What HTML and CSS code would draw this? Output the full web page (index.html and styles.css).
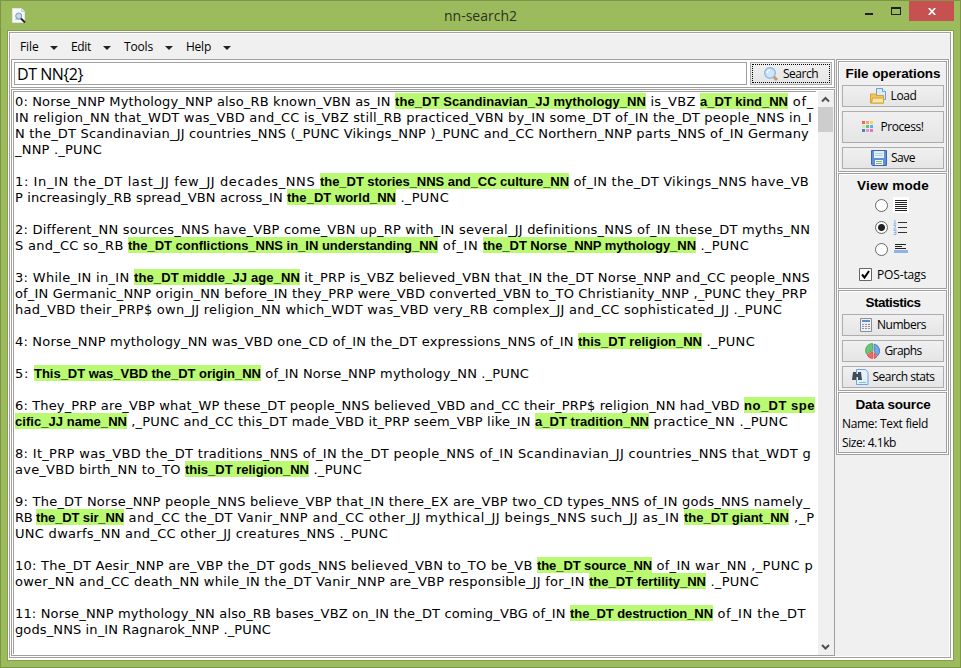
FILE: index.html
```
<!DOCTYPE html>
<html lang="en">
<head>
<meta charset="utf-8">
<title>nn-search2</title>
<link rel="stylesheet" href="styles.css">
</head>
<body>
<div class="window">
  <header class="titlebar">
    <svg class="app-icon" width="15" height="16" viewBox="0 0 15 16"><path d="M.5.5h9l3 3v11H.5z" fill="#f7f9fb" stroke="#dfe5ea"/><path d="M9.5.5v3h3" fill="#dfe6ec" stroke="#c3cbd2"/><path d="M3 12l3-8 3 8z" fill="#b9cde4"/><circle cx="6.7" cy="8" r="3" fill="#c6d9ee" stroke="#8198b4"/><path d="M9 10.5l4 4" stroke="#222" stroke-width="1.8"/></svg>
    <h1 class="title"><span data-w="73">nn-search2</span></h1>
    <div class="controls">
      <svg width="62" height="20" viewBox="0 0 62 20"><path d="M18 12h8v2h-8z" fill="#1e1e1e"/><path d="M44 6h10v8H44zM45 8v5h8V8z" fill="#1e1e1e" fill-rule="evenodd"/></svg>
      <div class="close"><svg width="8" height="7" viewBox="0 0 8 7"><path d="M.8 0l6.4 7M7.2 0L.8 7" stroke="#fff" stroke-width="1.7"/></svg></div>
    </div>
  </header>
  <div class="client">
    <nav class="menu">
      <span class="item m1"><span data-w="18.5">File</span><i></i></span>
      <span class="item m2"><span data-w="20">Edit</span><i></i></span>
      <span class="item m3"><span data-w="29">Tools</span><i></i></span>
      <span class="item m4"><span data-w="25">Help</span><i></i></span>
    </nav>
    <div class="body">
      <main class="main">
        <div class="search-row">
          <div class="query"><span data-w="66">DT NN{2}</span></div>
          <button class="btn search"><span class="focus"><svg width="16" height="16" viewBox="0 0 16 16"><path d="M10 10l4 4" stroke="#c99a5b" stroke-width="3"/><circle cx="7" cy="7" r="5.300" fill="#cfe6f8" stroke="#8fb9e0" stroke-width="1.4"/><path d="M4 7a3 3 0 0 1 3-3" fill="none" stroke="#fff"/></svg><span data-w="35">Search</span></span></button>
        </div>
        <div class="results">
          <div class="text">
<p><span data-w="380">0: Norse_NNP Mythology_NNP also_RB known_VBN as_IN </span><b data-w="251">the_DT Scandinavian_JJ mythology_NN</b><span data-w="54"> is_VBZ </span><b data-w="88">a_DT kind_NN</b><span data-w="26"> of_</span></p>
<p><span data-w="797">IN religion_NN that_WDT was_VBD and_CC is_VBZ still_RB practiced_VBN by_IN some_DT of_IN the_DT people_NNS in_I</span></p>
<p><span data-w="794">N the_DT Scandinavian_JJ countries_NNS (_PUNC Vikings_NNP )_PUNC and_CC Northern_NNP parts_NNS of_IN Germany</span></p>
<p><span data-w="87">_NNP ._PUNC</span></p>
<p></p>
<p><span data-w="305">1: In_IN the_DT last_JJ few_JJ decades_NNS </span><b data-w="249">the_DT stories_NNS and_CC culture_NN</b><span data-w="240"> of_IN the_DT Vikings_NNS have_VB</span></p>
<p><span data-w="272">P increasingly_RB spread_VBN across_IN </span><b data-w="109">the_DT world_NN</b><span data-w="53"> ._PUNC</span></p>
<p></p>
<p><span data-w="795">2: Different_NN sources_NNS have_VBP come_VBN up_RP with_IN several_JJ definitions_NNS of_IN these_DT myths_NN</span></p>
<p><span data-w="113">S and_CC so_RB </span><b data-w="310">the_DT conflictions_NNS in_IN understanding_NN</b><span data-w="45"> of_IN </span><b data-w="213">the_DT Norse_NNP mythology_NN</b><span data-w="53"> ._PUNC</span></p>
<p></p>
<p><span data-w="119">3: While_IN in_IN </span><b data-w="166">the_DT middle_JJ age_NN</b><span data-w="510"> it_PRP is_VBZ believed_VBN that_IN the_DT Norse_NNP and_CC people_NNS</span></p>
<p><span data-w="792">of_IN Germanic_NNP origin_NN before_IN they_PRP were_VBD converted_VBN to_TO Christianity_NNP ,_PUNC they_PRP</span></p>
<p><span data-w="767">had_VBD their_PRP$ own_JJ religion_NN which_WDT was_VBD very_RB complex_JJ and_CC sophisticated_JJ ._PUNC</span></p>
<p></p>
<p><span data-w="563">4: Norse_NNP mythology_NN was_VBD one_CD of_IN the_DT expressions_NNS of_IN </span><b data-w="124">this_DT religion_NN</b><span data-w="53"> ._PUNC</span></p>
<p></p>
<p><span data-w="19">5: </span><b data-w="227">This_DT was_VBD the_DT origin_NN</b><span data-w="268"> of_IN Norse_NNP mythology_NN ._PUNC</span></p>
<p></p>
<p><span data-w="729">6: They_PRP are_VBP what_WP these_DT people_NNS believed_VBD and_CC their_PRP$ religion_NN had_VBD </span><b data-w="71">no_DT spe</b></p>
<p><b data-w="112">cific_JJ name_NN</b><span data-w="408"> ,_PUNC and_CC this_DT made_VBD it_PRP seem_VBP like_IN </span><b data-w="114">a_DT tradition_NN</b><span data-w="139"> practice_NN ._PUNC</span></p>
<p></p>
<p><span data-w="796">8: It_PRP was_VBD the_DT traditions_NNS of_IN the_DT people_NNS of_IN Scandinavian_JJ countries_NNS that_WDT g</span></p>
<p><span data-w="170">ave_VBD birth_NN to_TO </span><b data-w="124">this_DT religion_NN</b><span data-w="53"> ._PUNC</span></p>
<p></p>
<p><span data-w="795">9: The_DT Norse_NNP people_NNS believe_VBP that_IN there_EX are_VBP two_CD types_NNS of_IN gods_NNS namely_</span></p>
<p><span data-w="21">RB </span><b data-w="88">the_DT sir_NN</b><span data-w="560"> and_CC the_DT Vanir_NNP and_CC other_JJ mythical_JJ beings_NNS such_JJ as_IN </span><b data-w="105">the_DT giant_NN</b><span data-w="26"> ,_P</span></p>
<p><span data-w="373">UNC dwarfs_NN and_CC other_JJ creatures_NNS ._PUNC</span></p>
<p></p>
<p><span data-w="522">10: The_DT Aesir_NNP are_VBP the_DT gods_NNS believed_VBN to_TO be_VB </span><b data-w="115">the_DT source_NN</b><span data-w="161"> of_IN war_NN ,_PUNC p</span></p>
<p><span data-w="574">ower_NN and_CC death_NN while_IN the_DT Vanir_NNP are_VBP responsible_JJ for_IN </span><b data-w="117">the_DT fertility_NN</b><span data-w="53"> ._PUNC</span></p>
<p></p>
<p><span data-w="555">11: Norse_NNP mythology_NN also_RB bases_VBZ on_IN the_DT coming_VBG of_IN </span><b data-w="143">the_DT destruction_NN</b><span data-w="93"> of_IN the_DT</span></p>
<p><span data-w="256">gods_NNS in_IN Ragnarok_NNP ._PUNC</span></p>
          </div>
          <div class="scrollbar">
            <svg width="15" height="16" viewBox="0 0 15 16"><path d="M4 10.500L7.500 7l3.500 3.500" fill="none" stroke="#505050" stroke-width="2"/></svg>
            <div class="thumb"></div>
            <svg class="down" width="15" height="16" viewBox="0 0 15 16"><path d="M4 6L7.500 9.500 11 6" fill="none" stroke="#505050" stroke-width="2"/></svg>
          </div>
        </div>
      </main>
      <aside class="side">
        <section class="panel files">
          <h2><span data-w="95">File operations</span></h2>
          <button class="btn"><svg width="17" height="16" viewBox="0 0 17 16"><path d="M6.500.5h6l3 3v8h-9z" fill="#d9eafb" stroke="#6f9fd6"/><path d="M12.500.5v3h3" fill="#fff" stroke="#6f9fd6"/><path d="M.5 15V6h5l1 1.500h7V15z" fill="#f3c65c" stroke="#d9a033"/><path d="M1.500 15l1-5h11v5z" fill="#fbe7a6" stroke="#d9a033"/></svg><span data-w="26">Load</span></button>
          <button class="btn tall"><svg class="grid" width="12" height="12" viewBox="0 0 12 12"><path d="M0 0h3v3H0z" fill="#ee6868"/><path d="M4 0h3v3H4z" fill="#fba36c"/><path d="M8 0h3v3H8z" fill="#f0d563"/><path d="M0 4h3v3H0z" fill="#cfe8b0"/><path d="M4 4h3v3H4z" fill="#5bc86b"/><path d="M8 4h3v3H8z" fill="#5cace8"/><path d="M0 8h3v3H0z" fill="#5d7cb4"/><path d="M4 8h3v3H4z" fill="#d99ae0"/><path d="M8 8h3v3H8z" fill="#f06fb0"/></svg><span data-w="43">Process!</span></button>
          <button class="btn"><svg width="16" height="16" viewBox="0 0 16 16"><path d="M.5.5h15v15h-14l-1-1z" fill="#5f8fdc" stroke="#3a68b8"/><path d="M3 1h10v7H3z" fill="#e9f1fb"/><path d="M4 3.500h8M4 5.500h8" stroke="#b6cbe8"/><path d="M4 10h8v5H4z" fill="#f4f8f0"/><path d="M5 11.500h6M5 13.500h6" stroke="#85b765"/></svg><span data-w="24">Save</span></button>
        </section>
        <section class="panel view">
          <h2><span data-w="72">View mode</span></h2>
          <div class="modes">
          <div class="mode"><i class="radio"></i><svg width="16" height="16" viewBox="0 0 16 16"><path d="M0 0h16v16H0z" fill="#fff"/><path d="M2 3.500h12M2 5.500h12M2 7.500h12M2 9.500h12M2 11.500h12M2 13.500h12" stroke="#222"/></svg></div>
          <div class="mode"><i class="radio on"></i><svg width="16" height="16" viewBox="0 0 16 16"><path d="M5 3.500h9M5 8.500h9M5 13.500h9" stroke="#333"/><path d="M1 1.500h1v3.500M.5 5h3M.5 6.500h2v1.500l-2 2h3M.5 11.500h2.500v4H.5M1 13.500h2" fill="none" stroke="#8fb2e6"/></svg></div>
          <div class="mode"><i class="radio"></i><svg width="16" height="16" viewBox="0 0 16 16"><path d="M2 3.500h11M2 5.500h7M2 7.500h11" stroke="#222"/><path d="M1 9h14v3H1z" fill="#8fb2e6"/></svg></div>
          </div>
          <div class="check"><svg width="13" height="13" viewBox="0 0 13 13"><path d="M.5.5h12v12H.5z" fill="#fff" stroke="#666"/><path d="M3 6.500l2.500 3L10 3" fill="none" stroke="#000" stroke-width="2"/></svg><span data-w="49">POS-tags</span></div>
        </section>
        <section class="panel stats">
          <h2><span data-w="55">Statistics</span></h2>
          <button class="btn"><svg width="12" height="14" viewBox="0 0 12 14"><path d="M.5.5h11v13H.5z" fill="#eef1f4" stroke="#8d8d95"/><path d="M2 2h8v2H2z" fill="#5f8bd0"/><path d="M2 6.500h8M2 8.500h8M2 10.500h8" stroke="#8792a5" stroke-dasharray="2 1"/><path d="M8 6h2v1H8z" fill="#e06040"/></svg><span class="gap" data-w="49">Numbers</span></button>
          <button class="btn"><svg width="16" height="16" viewBox="0 0 16 16"><path d="M7.500 7.500V.5a7 7 0 0 0-6 10.500z" fill="#68c678" stroke="#399b4c" stroke-width=".7"/><path d="M9 8V1a7 7 0 0 1 3.500 12z" fill="#72a9e4" stroke="#3b6faf" stroke-width=".7"/><path d="M7.500 8.500v7A7 7 0 0 1 2 12zM9 9.500l3 4.500-3 1.500z" fill="#ef6a60" stroke="#d04440" stroke-width=".7"/></svg><span data-w="37">Graphs</span></button>
          <button class="btn"><svg width="17" height="16" viewBox="0 0 17 16"><path d="M4.500.5h9l2.500 3v12H4.500z" fill="#e4f1fd" stroke="#6fa4de"/><path d="M7 13.500h7" stroke="#6cc0f2"/><path d="M1 3h3v2h2V3h3l1 8H6V8H4v3H0z" fill="#444b54"/></svg><span data-w="62">Search stats</span></button>
        </section>
        <section class="panel source">
          <h2><span data-w="75">Data source</span></h2>
          <div class="info"><span data-w="86">Name: Text field</span></div>
          <div class="info"><span data-w="54">Size: 4.1kb</span></div>
        </section>
      </aside>
    </div>
  </div>
</div>
<script src="fit.js"></script>
</body>
</html>
```
FILE: styles.css
```
* { box-sizing: border-box; }
body { margin: 0; font: 12px/16px "Open Sans", sans-serif; color: #000; overflow: hidden; }
svg { display: block; flex: none; }
[data-w] { display: inline-block; white-space: pre; }
.window { width: 961px; height: 668px; padding: 0 6px 6px; display: flex; flex-direction: column; background: #9cbb5c; border: 1px solid #7c9549; }
.titlebar { height: 29px; flex: none; display: grid; grid-template-columns: 106px 1fr 106px; }
.app-icon { margin: 7px 0 0 5px; }
.title { margin: 6px 0 0; text-align: center; font-size: 14px; line-height: 18px; font-weight: 400; color: #2b3320; }
.controls { display: flex; justify-content: flex-end; }
.close { width: 45px; height: 20px; flex: none; display: grid; place-items: center; background: #c75050; }
.client { flex: 1; min-height: 0; border: 1px solid #839f4c; background: #fff; padding: 1px 2px 2px 1px; display: flex; flex-direction: column; }
.menu { height: 27px; flex: none; display: flex; background: #f0f0f0; border: 1px solid #a0a0a0; border-bottom: 0; box-shadow: inset 1px 1px #fff; padding: 6px 0 0 10px; }
.item { display: flex; justify-content: space-between; }
.item i { width: 0; height: 0; margin-top: 7px; border: 4px solid transparent; border-top-color: #222; border-bottom: 0; }
.m1 { width: 38px; margin-right: 13px; }
.m2 { width: 40px; margin-right: 13px; }
.m3 { width: 49px; margin-right: 13px; }
.m4 { width: 45px; }
.body { flex: 1; min-height: 0; display: flex; gap: 1px; background: #f0f0f0; border: 1px solid #a0a0a0; border-top: 0; box-shadow: inset 1px 0 #fff, inset -1px -1px #fff; padding: 0 1px 1px; }
.main { width: 824px; flex: none; display: flex; flex-direction: column; gap: 1px; background: #fff; }
.search-row { height: 29px; flex: none; border: 1px solid #a0a0a0; padding: 2px; display: flex; justify-content: space-between; }
.query { width: 733px; border: 1px solid #a0a0a0; padding: 1px 2px; font-size: 16px; line-height: 21px; }
.btn { font: inherit; color: inherit; display: flex; align-items: center; justify-content: center; gap: 4px; padding: 0; margin: 0; background: linear-gradient(#f0f0f0, #e5e5e5); border: 1px solid #adadad; border-radius: 0; }
.search { width: 82px; }
.focus { display: flex; width: 78px; height: 19px; border: 1px dotted #000; gap: 4px; padding-right: 1px; align-items: center; justify-content: center; }
.results { flex: 1; min-height: 0; border: 1px solid #a0a0a0; padding: 1px 0 0 1px; display: flex; justify-content: space-between; }
.text { width: 803px; margin-bottom: 1px; border: solid #a0a0a0; border-width: 1px 0 0 1px; padding: 1px 0 0 1px; font: 13px/16px "DejaVu Sans", Verdana, sans-serif; }
.text p { margin: 0; height: 16px; display: flex; }
.text [data-w] { height: 16px; padding-top: 1px; flex: none; }
.text b { font: bold 13px/16px "Liberation Sans", Arial, sans-serif; background: #b9fa72; }
.scrollbar { width: 16px; background: #f0f0f0; display: flex; flex-direction: column; }
.thumb { width: 15px; height: 25px; background: #cdcdcd; }
.down { margin-top: auto; }
.side { width: 113px; flex: none; border: 1px solid #a0a0a0; padding: 1px; height: 396px; display: flex; flex-direction: column; gap: 1px; background: #fff; }
.panel { border: 1px solid #a0a0a0; background: #f0f0f0; box-shadow: inset 1px 1px #fff; padding: 0 2px 0 3px; flex: none; }
h2 { margin: 0; height: 23px; text-align: center; font: bold 13.5px/24px "Liberation Sans", Arial, sans-serif; }
.panel .btn { width: 102px; height: 22px; }
.files { height: 111px; }
.files .btn.tall { height: 32px; margin: 4px 0; gap: 7px; padding-right: 1px; }
.view { height: 116px; }
.modes { margin-top: -3px; }
.mode { display: flex; gap: 5px; height: 22px; align-items: center; padding-left: 33px; }
.radio { width: 13px; height: 13px; border: 1px solid #666; border-radius: 50%; background: #fff; }
.radio.on { background: radial-gradient(circle, #222 3px, #fff 4px); }
.check { height: 13px; display: flex; align-items: center; gap: 5px; margin: 8px 0 0 17px; }
.stats { height: 101px; }
.stats .btn { margin-bottom: 4px; }
.stats .gap { margin-left: 1px; }
.source { height: 61px; }
.info { height: 19px; line-height: 15px; }
```
FILE: fit.js
```
// Spread each run of text over the width given in data-w.
document.fonts.ready.then(function () {
  document.querySelectorAll('[data-w]').forEach(function (run) {
    var width = parseFloat(run.dataset.w);
    var natural = run.getBoundingClientRect().width;
    run.style.letterSpacing = (width - natural) / run.textContent.length + 'px';
    run.style.width = width + 'px';
  });
});
```
